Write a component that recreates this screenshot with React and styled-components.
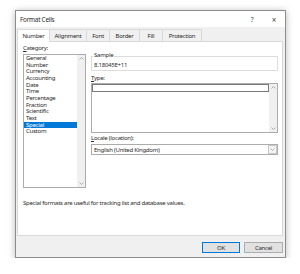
import React from 'react';
import styled, { createGlobalStyle } from 'styled-components';

const GlobalStyle = createGlobalStyle`
  html, body {
    margin: 0;
    padding: 0;
    background: #ffffff;
  }
  body {
    font-family: "Noto Sans", "Liberation Sans", sans-serif;
    font-size: 6px;
    letter-spacing: -0.25px;
    color: #2a2a2a;
  }
`;

const Dialog = styled.div`
  box-sizing: border-box;
  width: 271px;
  height: 248px;
  margin: 10px 0 0 15px;
  border: 1px solid #8c8c8c;
  background: #f0f0f0;
  box-shadow: 0 1px 7px rgba(0, 0, 0, 0.28);
  display: flex;
  flex-direction: column;
`;

const TitleBar = styled.div`
  height: 16px;
  background: #ffffff;
  display: flex;
  align-items: center;
  padding-left: 4px;
`;

const Title = styled.div`
  flex: 1;
  font-size: 6.4px;
`;

const TitleButton = styled.div`
  width: 22px;
  text-align: center;
  font-size: ${({ big }) => (big ? '8px' : '6.5px')};
  color: #444;
`;

const Body = styled.div`
  flex: 1;
  display: flex;
  flex-direction: column;
  padding: 1px 2px 0 1px;
`;

const Tabs = styled.div`
  display: flex;
  height: 13px;
  align-items: flex-end;
`;

const Tab = styled.div`
  box-sizing: border-box;
  width: ${({ w }) => w}px;
  height: ${({ active }) => (active ? 13 : 12)}px;
  border: 1px solid #d9d9d9;
  border-bottom: ${({ active }) => (active ? '1px solid #fff' : 'none')};
  border-left: ${({ active, first }) => (active || first ? '1px solid #d9d9d9' : 'none')};
  background: ${({ active }) => (active ? '#ffffff' : '#f0f0f0')};
  margin-bottom: ${({ active }) => (active ? '-1px' : '0')};
  position: relative;
  display: flex;
  align-items: center;
  justify-content: center;
`;

const Panel = styled.div`
  box-sizing: border-box;
  height: 195px;
  background: #ffffff;
  border: 1px solid #d9d9d9;
  padding: 2px 4px 0 5px;
  display: flex;
  flex-direction: column;
`;

const Columns = styled.div`
  display: flex;
  gap: 5px;
`;

const LeftCol = styled.div`
  width: 63px;
  display: flex;
  flex-direction: column;
`;

const RightCol = styled.div`
  flex: 1;
  display: flex;
  flex-direction: column;
`;

const Label = styled.div`
  line-height: 7px;
  height: 7px;
  margin-top: ${({ mt }) => mt || 0}px;
  margin-bottom: ${({ mb }) => mb || 0}px;
`;

const ListBox = styled.div`
  box-sizing: border-box;
  height: 134px;
  border: 1px solid #acacac;
  display: flex;
`;

const ListItems = styled.div`
  flex: 1;
`;

const ListItem = styled.div`
  height: 6.67px;
  line-height: 6.67px;
  padding-left: 2px;
  background: ${({ selected }) => (selected ? '#0078d7' : 'transparent')};
  color: ${({ selected }) => (selected ? '#ffffff' : 'inherit')};
`;

const ScrollBar = styled.div`
  width: 8px;
  background: #f0f0f0;
  display: flex;
  flex-direction: column;
  justify-content: space-between;
  align-items: center;
  padding: 2px 0;
`;

const GroupBox = styled.div`
  position: relative;
  box-sizing: border-box;
  height: 15px;
  margin-top: 12px;
  border: 1px solid #dcdcdc;
  display: flex;
  align-items: center;
  padding: 2px 0 0 2px;
`;

const Legend = styled.span`
  position: absolute;
  top: -5px;
  left: 1px;
  padding: 0 1px;
  background: #ffffff;
  line-height: 7px;
`;

const TypeBox = styled.div`
  box-sizing: border-box;
  height: 50px;
  border: 1px solid #acacac;
  display: flex;
`;

const TypeInput = styled.div`
  flex: 1;
  box-sizing: border-box;
  height: 8px;
  border: 1px solid #7a7a7a;
`;

const Select = styled.div`
  box-sizing: border-box;
  height: 11px;
  border: 1px solid #acacac;
  display: flex;
  align-items: center;
  padding-left: 2px;
`;

const SelectText = styled.div`
  flex: 1;
`;

const DropButton = styled.div`
  box-sizing: border-box;
  width: 9px;
  height: 9px;
  border: 1px solid #c8c8c8;
  background: #f4f4f4;
  display: flex;
  align-items: center;
  justify-content: center;
`;

const Description = styled.div`
  margin-top: 12px;
  line-height: 7px;
`;

const Footer = styled.div`
  display: flex;
  justify-content: flex-end;
  gap: 4px;
  margin-top: 6px;
`;

const Button = styled.div`
  box-sizing: border-box;
  width: ${({ w }) => w}px;
  height: 11px;
  background: #e1e1e1;
  border: 1px solid ${({ primary }) => (primary ? '#0078d7' : '#adadad')};
  display: flex;
  align-items: center;
  justify-content: center;
`;

const Chevron = ({ up }) => (
  <svg width="5" height="3" viewBox="0 0 5 3">
    <path
      d={up ? 'M0.5 2.5 L2.5 0.5 L4.5 2.5' : 'M0.5 0.5 L2.5 2.5 L4.5 0.5'}
      fill="none"
      stroke="#9a9a9a"
      strokeWidth="0.8"
    />
  </svg>
);

const tabs = [
  { label: 'Number', w: 33 },
  { label: 'Alignment', w: 37 },
  { label: 'Font', w: 23 },
  { label: 'Border', w: 30 },
  { label: 'Fill', w: 23 },
  { label: 'Protection', w: 39 },
];

const categories = [
  'General',
  'Number',
  'Currency',
  'Accounting',
  'Date',
  'Time',
  'Percentage',
  'Fraction',
  'Scientific',
  'Text',
  'Special',
  'Custom',
];

export default function App() {
  return (
    <>
      <GlobalStyle />
      <Dialog>
        <TitleBar>
          <Title>Format Cells</Title>
          <TitleButton>?</TitleButton>
          <TitleButton big>×</TitleButton>
        </TitleBar>
        <Body>
          <Tabs>
            {tabs.map((t, i) => (
              <Tab key={t.label} w={t.w} active={i === 0} first={i === 0}>
                {t.label}
              </Tab>
            ))}
          </Tabs>
          <Panel>
            <Columns>
              <LeftCol>
                <Label mt={1} mb={2}>
                  <u>C</u>ategory:
                </Label>
                <ListBox>
                  <ListItems>
                    {categories.map((c) => (
                      <ListItem key={c} selected={c === 'Special'}>
                        {c}
                      </ListItem>
                    ))}
                  </ListItems>
                  <ScrollBar>
                    <Chevron up />
                    <Chevron />
                  </ScrollBar>
                </ListBox>
              </LeftCol>
              <RightCol>
                <GroupBox>
                  <Legend>Sample</Legend>
                  8.18045E+11
                </GroupBox>
                <Label mt={4} mb={1}>
                  <u>T</u>ype:
                </Label>
                <TypeBox>
                  <TypeInput />
                  <ScrollBar>
                    <Chevron up />
                    <Chevron />
                  </ScrollBar>
                </TypeBox>
                <Label mt={2} mb={2}>
                  <u>L</u>ocale (location):
                </Label>
                <Select>
                  <SelectText>English (United Kingdom)</SelectText>
                  <DropButton>
                    <Chevron />
                  </DropButton>
                </Select>
              </RightCol>
            </Columns>
            <Description>Special formats are useful for tracking list and database values.</Description>
          </Panel>
          <Footer>
            <Button primary w={38}>
              OK
            </Button>
            <Button w={39}>Cancel</Button>
          </Footer>
        </Body>
      </Dialog>
    </>
  );
}
